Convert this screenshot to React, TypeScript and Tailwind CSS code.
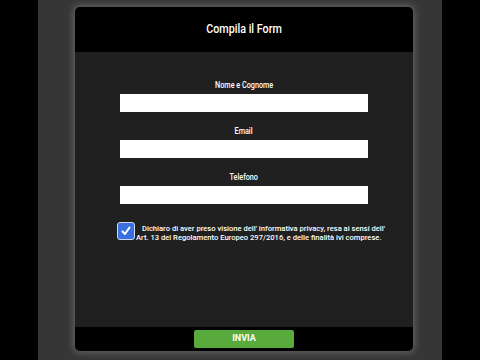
import { useState } from "react";

const App = () => {
  const [checked, setChecked] = useState(true);

  return (
    <div className="w-[480px] h-[360px] bg-black flex justify-center overflow-hidden font-['Roboto',sans-serif]">
      <div className="w-[404px] h-full bg-[#363636] pt-[7px] pl-[37px] flex">
        <div className="w-[338px] h-[344px] flex flex-col rounded-[5px] shadow-[0_0_7px_2px_rgba(255,255,255,0.22)]">
          {/* Header */}
          <div className="h-[45px] bg-black rounded-t-[5px] flex items-center justify-center">
            <h1 className="text-white text-[12.5px] font-medium scale-x-[0.86]">Compila il Form</h1>
          </div>

          {/* Body */}
          <div className="flex-1 bg-[#202020] flex flex-col items-center pt-[28px]">
            <label className="text-white text-[8.5px] font-medium leading-[10px] scale-x-[0.85]">Nome e Cognome</label>
            <input type="text" className="mt-[4px] w-[248px] h-[18px] bg-white outline-none" />

            <label className="mt-[14px] text-white text-[8.5px] font-medium leading-[10px] scale-x-[0.85]">Email</label>
            <input type="email" className="mt-[4px] w-[248px] h-[18px] bg-white outline-none" />

            <label className="mt-[14px] text-white text-[8.5px] font-medium leading-[10px] scale-x-[0.85]">Telefono</label>
            <input type="tel" className="mt-[4px] w-[248px] h-[18px] bg-white outline-none" />

            <div className="mt-[18px] self-start ml-[42px] flex items-start">
              <button
                type="button"
                onClick={() => setChecked(!checked)}
                className="w-[18px] h-[18px] shrink-0 rounded-[3px] border border-[#cfd8f0] bg-[#3a6fe0] flex items-center justify-center"
              >
                {checked && (
                  <svg width="12" height="12" viewBox="0 0 12 12">
                    <path d="M2.5 6.5 L5 9 L9.5 2.5" stroke="white" strokeWidth="2" fill="none" strokeLinecap="round" strokeLinejoin="round" />
                  </svg>
                )}
              </button>
              <p className="ml-[1px] pt-[2px] text-white text-[7.6px] font-medium leading-[9px] whitespace-nowrap">
                <span className="pl-[6px]">Dichiaro di aver preso visione dell' informativa privacy, resa ai sensi dell'</span>
                <br />
                Art. 13 del Regolamento Europeo 297/2016, e delle finalità ivi comprese.
              </p>
            </div>
          </div>

          {/* Footer */}
          <div className="h-[24px] bg-black rounded-b-[5px] flex items-start justify-center pt-[3px]">
            <button type="button" className="w-[100px] h-[18px] bg-[#58aa3c] rounded-[2px] text-white text-[9px] font-bold">
              INVIA
            </button>
          </div>
        </div>
      </div>
    </div>
  );
};

export default App;
